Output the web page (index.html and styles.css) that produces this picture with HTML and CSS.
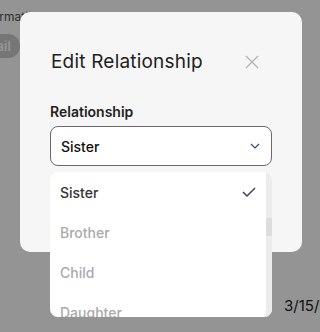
FILE: index.html
```html
<!DOCTYPE html>
<html lang="en">
<head>
    <meta charset="utf-8">
    <meta name="viewport" content="width=device-width, initial-scale=1.0">
    <title>Edit Relationship</title>
    <link rel="stylesheet" href="styles.css">
</head>
<body>
    <div class="page">
        <p class="bg-text">information be shown to the contact</p>
        <span class="bg-pill">Email</span>
        <span class="bg-date">3/15/24</span>
        <div class="overlay"></div>

        <div class="modal">
            <div class="modal-head">
                <h2>Edit Relationship</h2>
                <button class="close" type="button" aria-label="Close">
                    <svg width="14" height="14" viewBox="0 0 14 14"><path d="M1 1L13 13M13 1L1 13" stroke="#b4b4b4" stroke-width="1.4" fill="none"/></svg>
                </button>
            </div>
            <label class="field-label">Relationship</label>
            <div class="select">
                <span>Sister</span>
                <svg width="10" height="6" viewBox="0 0 10 6"><path d="M1 1L5 5L9 1" stroke="#2c4a78" stroke-width="1.2" fill="none"/></svg>
            </div>
            <div class="modal-foot">
                <button class="save" type="button">Save</button>
            </div>
        </div>

        <div class="dropdown">
            <ul class="options">
                <li class="selected">Sister
                    <svg width="14" height="10" viewBox="0 0 14 10"><path d="M1 5L5 9L13 1" stroke="#2c3e5c" stroke-width="1.4" fill="none"/></svg>
                </li>
                <li>Brother</li>
                <li>Child</li>
                <li>Daughter</li>
            </ul>
            <div class="scrollbar"><div class="thumb"></div></div>
        </div>
    </div>
</body>
</html>
```

FILE: styles.css
```css
body {
    margin: 0;
    font-family: Inter, "Noto Sans", sans-serif;
}

.page {
    position: relative;
    width: 320px;
    height: 332px;
    overflow: hidden;
    background: #ffffff;
}

.bg-text {
    position: absolute;
    left: -22px;
    top: 10px;
    margin: 0;
    font-size: 12px;
    line-height: 14px;
    color: #555;
    white-space: nowrap;
}

.bg-pill {
    position: absolute;
    left: -33px;
    top: 34px;
    height: 24px;
    padding: 0 9px 0 10px;
    border-radius: 12px;
    background: #cbcbcb;
    color: #fff;
    font-size: 13px;
    font-weight: 600;
    line-height: 24px;
}

.bg-date {
    position: absolute;
    left: 284px;
    top: 296px;
    font-size: 15px;
    color: #222;
}

.overlay {
    position: absolute;
    inset: 0;
    background: rgba(0, 0, 0, 0.42);
}

.modal {
    position: absolute;
    left: 20px;
    top: 12px;
    width: 282px;
    height: 240px;
    box-sizing: border-box;
    padding: 38px 30px 0 30px;
    background: #f6f6f6;
    border-radius: 10px;
}

.modal-head {
    display: flex;
    align-items: center;
    justify-content: space-between;
    padding-left: 1px;
}

.modal-head h2 {
    margin: 0;
    font-size: 19px;
    font-weight: 400;
    color: #222;
    letter-spacing: 0.2px;
}

.close {
    border: none;
    background: none;
    padding: 0;
    margin-right: 13px;
    display: flex;
}

.field-label {
    display: block;
    margin-top: 30px;
    font-size: 14px;
    font-weight: 600;
    color: #222;
}

.select {
    margin-top: 6px;
    height: 40px;
    box-sizing: border-box;
    border: 1px solid #6a6a6a;
    border-radius: 8px;
    background: #fff;
    display: flex;
    align-items: center;
    justify-content: space-between;
    padding: 0 11px 0 10px;
    font-size: 14px;
    font-weight: 500;
    color: #111;
}

.modal-foot {
    display: flex;
    justify-content: flex-end;
    margin-top: 40px;
}

.save {
    border: none;
    border-radius: 6px;
    background: #dedede;
    height: 18px;
    width: 60px;
}

.dropdown {
    position: absolute;
    left: 50px;
    top: 172px;
    width: 222px;
    height: 145px;
    display: flex;
    background: #fff;
    border-radius: 8px;
    overflow: hidden;
}

.options {
    list-style: none;
    margin: 0;
    padding: 0;
    flex: 1;
}

.options li {
    height: 40px;
    display: flex;
    align-items: center;
    justify-content: space-between;
    padding: 0 10px 0 10px;
    font-size: 14px;
    font-weight: 500;
    color: #aaa;
}

.options li.selected {
    color: #333;
}

.scrollbar {
    width: 6px;
    background: #ececec;
    position: relative;
}

.thumb {
    position: absolute;
    top: 46px;
    left: 0;
    width: 6px;
    height: 18px;
    background: #dcdcdc;
}
```
